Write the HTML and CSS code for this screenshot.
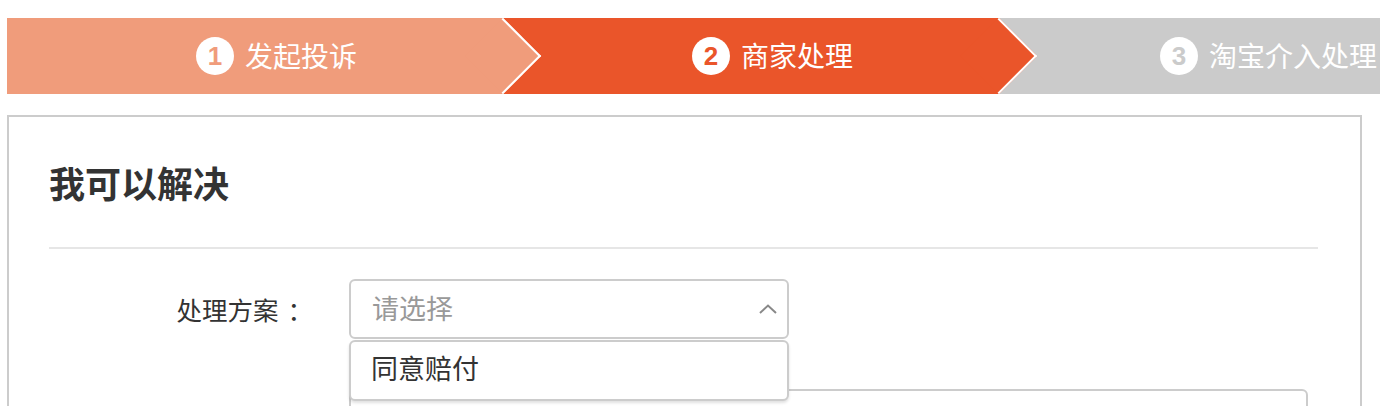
FILE: index.html
```html
<!DOCTYPE html>
<html lang="zh-CN">
<head>
<meta charset="utf-8">
<title>商家处理</title>
<link rel="stylesheet" href="styles.css">
</head>
<body>
<div class="page">
  <div class="steps">
    <div class="step step-done"><span class="num">1</span><span class="step-text">发起投诉</span></div>
    <div class="step step-active"><span class="num">2</span><span class="step-text">商家处理</span></div>
    <div class="step step-todo"><span class="num">3</span><span class="step-text">淘宝介入处理</span></div>
  </div>
  <div class="panel">
    <h2 class="title">我可以解决</h2>
    <div class="divider"></div>
    <div class="form-row">
      <label class="form-label">处理方案<span class="colon">：</span></label>
      <div class="select-wrap">
        <div class="select">
          <span class="placeholder">请选择</span>
          <svg class="chevron" width="18" height="10" viewBox="0 0 18 10"><polyline points="1,9 9,1.5 17,9" fill="none" stroke="#888" stroke-width="2"/></svg>
        </div>
        <ul class="dropdown"><li>同意赔付</li></ul>
      </div>
    </div>
    <div class="form-row row-note">
      <span class="form-label"></span>
      <div class="textarea"></div>
    </div>
  </div>
</div>
</body>
</html>
```
FILE: styles.css
```css
html, body {
  margin: 0;
  padding: 0;
  background: #fff;
  overflow: hidden;
  font-family: "Noto Sans CJK SC", "Noto Sans", sans-serif;
}

.page {
  padding: 18px 0 0 7px;
}

.steps {
  display: flex;
  height: 76px;
  overflow: hidden;
}

.step {
  flex: 0 0 496px;
  box-sizing: border-box;
  position: relative;
  display: flex;
  align-items: center;
  justify-content: center;
  gap: 11px;
  padding-left: 43px;
  color: #fff;
  font-size: 28px;
}

.step::after {
  content: "";
  position: absolute;
  z-index: 1;
  top: 50%;
  right: 0;
  width: 54px;
  height: 54px;
  box-sizing: border-box;
  background: inherit;
  border-top: 2px solid #fff;
  border-right: 2px solid #fff;
  transform: translate(50%, -50%) rotate(45deg);
}

.step-todo::after {
  display: none;
}

.step-done { background: #f09c7b; }
.step-active { background: #ea552a; }
.step-todo { background: #cbcbcb; }

.num {
  width: 38px;
  height: 38px;
  border-radius: 50%;
  background: #fff;
  text-align: center;
  font: bold 26px/38px "Liberation Sans", sans-serif;
}

.step-done .num { color: #f09c7b; }
.step-active .num { color: #ea552a; }
.step-todo .num { color: #cbcbcb; }

.step-text {
  line-height: 38px;
  padding-bottom: 2px;
}

.panel {
  margin-top: 21px;
  width: 1355px;
  height: 320px;
  box-sizing: border-box;
  border: 2px solid #cccccc;
  border-bottom: none;
  padding: 38px 42px 0 40px;
  background: #fff;
}

.title {
  margin: 0;
  font-size: 36px;
  line-height: 54px;
  font-weight: bold;
  color: #333;
}

.divider {
  margin-top: 38px;
  height: 2px;
  background: #e6e6e6;
}

.form-row {
  display: flex;
  align-items: center;
  margin-top: 30px;
}

.row-note {
  align-items: flex-start;
  margin-top: 50px;
}

.form-label {
  flex: 0 0 300px;
  box-sizing: border-box;
  padding-right: 36px;
  padding-bottom: 2px;
  text-align: right;
  font-size: 25.5px;
  color: #333;
}

.colon {
  display: inline-block;
  padding-left: 9px;
}

.select-wrap {
  position: relative;
  width: 440px;
}

.select {
  height: 60px;
  box-sizing: border-box;
  border: 2px solid #cccccc;
  border-radius: 6px;
  display: flex;
  align-items: center;
  justify-content: space-between;
  padding: 0 10px 3px 21px;
  font-size: 27px;
  color: #999;
}

.chevron {
  display: block;
  margin-top: 3px;
}

.dropdown {
  position: absolute;
  z-index: 2;
  top: 61px;
  left: 0;
  width: 100%;
  height: 61px;
  box-sizing: border-box;
  margin: 0;
  padding: 0 0 0 20px;
  list-style: none;
  border: 2px solid #cccccc;
  border-radius: 6px;
  background: #fff;
  box-shadow: 0 2px 3px rgba(0, 0, 0, 0.12);
  font-size: 27px;
  line-height: 52px;
  color: #333;
}

.textarea {
  flex: 0 0 959px;
  height: 120px;
  box-sizing: border-box;
  border: 2px solid #cccccc;
  border-radius: 6px;
}
```
